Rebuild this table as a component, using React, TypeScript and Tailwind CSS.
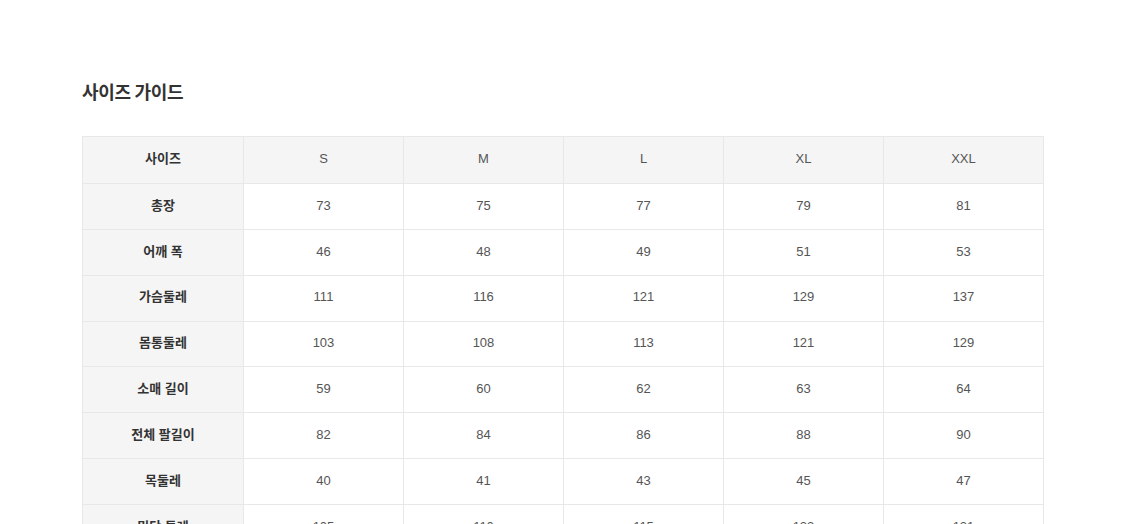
const SIZES = ['S', 'M', 'L', 'XL', 'XXL']

const ROWS: { label: string; values: number[] }[] = [
  { label: '총장', values: [73, 75, 77, 79, 81] },
  { label: '어깨 폭', values: [46, 48, 49, 51, 53] },
  { label: '가슴둘레', values: [111, 116, 121, 129, 137] },
  { label: '몸통둘레', values: [103, 108, 113, 121, 129] },
  { label: '소매 길이', values: [59, 60, 62, 63, 64] },
  { label: '전체 팔길이', values: [82, 84, 86, 88, 90] },
  { label: '목둘레', values: [40, 41, 43, 45, 47] },
  { label: '밑단 둘레', values: [105, 110, 115, 123, 131] },
]

export default function App() {
  return (
    <div className="min-h-[524px] bg-white pl-[82px] pt-[79px] font-['Liberation_Sans','Noto_Sans_CJK_KR',sans-serif] text-[#333]">
      <h2 className="font-['Noto_Sans_CJK_KR',sans-serif] text-[18px] font-bold leading-[24px] tracking-[-0.3px]">
        사이즈 가이드
      </h2>

      <table className="mt-[33px] w-[962px] table-fixed border-collapse border border-[#e8e8e8] text-center text-[13px]">
        <colgroup>
          <col className="w-[161px]" />
          {SIZES.map((s) => (
            <col key={s} className="w-[160px]" />
          ))}
        </colgroup>
        <thead>
          <tr className="h-[47px] bg-[#f5f5f5]">
            <th className="border border-[#e8e8e8] pb-[2px] font-bold text-[#333]">사이즈</th>
            {SIZES.map((s) => (
              <td key={s} className="border border-[#e8e8e8] pb-[2px] font-normal text-[#555]">
                {s}
              </td>
            ))}
          </tr>
        </thead>
        <tbody>
          {ROWS.map((row) => (
            <tr key={row.label} className="h-[45.85px]">
              <th className="border border-[#e8e8e8] bg-[#f5f5f5] pb-[2px] font-bold text-[#333]">{row.label}</th>
              {row.values.map((v, i) => (
                <td key={i} className="border border-[#e8e8e8] pb-[2px] text-[#555]">
                  {v}
                </td>
              ))}
            </tr>
          ))}
        </tbody>
      </table>
    </div>
  )
}
